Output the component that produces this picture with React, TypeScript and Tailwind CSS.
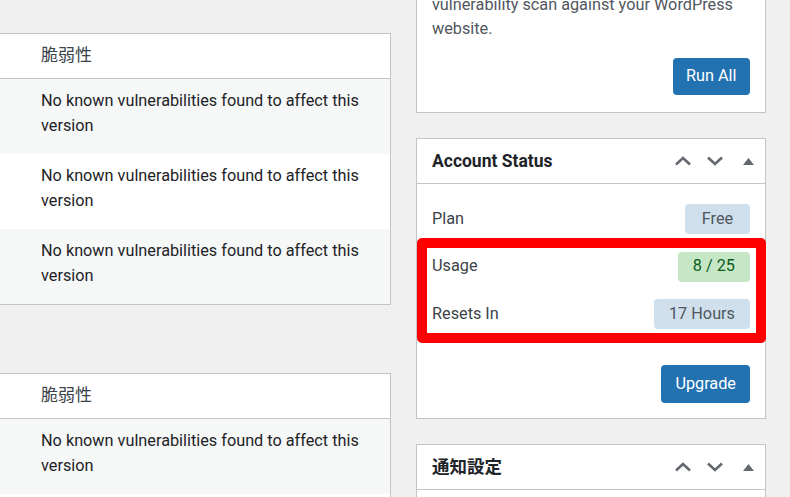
import React from "react";

const font = { fontFamily: 'Roboto, "Noto Sans CJK JP", sans-serif' };

function HeaderIcons() {
  return (
    <div className="flex items-center text-[#646970]">
      <span className="w-[32px] h-[44px] flex items-center justify-center">
        <svg width="18" height="10" viewBox="0 0 18 10" fill="none">
          <polyline points="2,8.5 9,2 16,8.5" stroke="currentColor" strokeWidth="2.6" />
        </svg>
      </span>
      <span className="w-[32px] h-[44px] flex items-center justify-center">
        <svg width="18" height="10" viewBox="0 0 18 10" fill="none">
          <polyline points="2,1.5 9,8 16,1.5" stroke="currentColor" strokeWidth="2.6" />
        </svg>
      </span>
      <span className="w-[34px] h-[44px] flex items-center justify-center">
        <svg width="11" height="7" viewBox="0 0 11 7">
          <polygon points="0,7 5.5,0 11,7" fill="currentColor" />
        </svg>
      </span>
    </div>
  );
}

function VulnTable({ rows }: { rows: number }) {
  return (
    <div className="bg-white border-y border-r border-[#c3c4c7]">
      <div className="h-[45px] flex items-center pl-[41px] text-[17px] text-[#3c434a] border-b border-[#c3c4c7]">
        脆弱性
      </div>
      {Array.from({ length: rows }).map((_, i) => (
        <div
          key={i}
          className={`pl-[41px] pr-4 pt-[9px] pb-[16px] h-[75px] text-[16.25px] leading-[25px] text-[#1d2327] ${
            i % 2 === 0 ? "bg-[#f6f7f7]" : "bg-white"
          }`}
        >
          No known vulnerabilities found to affect this version
        </div>
      ))}
    </div>
  );
}

function Badge({ children, tone, className = "" }: { children: React.ReactNode; tone: "blue" | "green"; className?: string }) {
  return (
    <span
      className={`h-[30px] px-[15px] rounded-[4px] flex items-center justify-center text-[16.25px] ${
        tone === "green" ? "bg-[#c6e7c6] text-[#0a5c1a]" : "bg-[#cfe0ec] text-[#50575e]"
      } ${className}`}
    >
      {children}
    </span>
  );
}

export default function App() {
  return (
    <div className="w-[790px] h-[497px] overflow-hidden bg-[#f0f0f1] flex items-start" style={font}>
      <div className="w-[391px] pt-[33px] flex flex-col gap-[68px] shrink-0">
        <VulnTable rows={3} />
        <VulnTable rows={2} />
      </div>

      <div className="ml-[25px] w-[350px] flex flex-col gap-[25px] -mt-[7px] shrink-0">
        <div className="bg-white border-x border-b border-[#c3c4c7] px-[15px] pb-[17px]">
          <p className="text-[16.25px] leading-[24px] text-[#50575e]">
            vulnerability scan against your WordPress website.
          </p>
          <div className="flex justify-end mt-[17px]">
            <button className="h-[37px] px-[13.5px] rounded-[4px] bg-[#2271b1] text-white text-[16.25px]">Run All</button>
          </div>
        </div>

        <div className="bg-white border border-[#c3c4c7]">
          <div className="h-[45px] flex items-center justify-between pl-[15px] border-b border-[#c3c4c7]">
            <h2 className="text-[17.5px] font-bold text-[#1d2327]">Account Status</h2>
            <HeaderIcons />
          </div>
          <div className="relative px-[15px] pt-[20px] pb-[15px]">
            <div className="flex flex-col gap-[17.5px]">
              <div className="flex items-center justify-between text-[16.25px] text-[#3c434a]">
                <span>Plan</span>
                <Badge tone="blue" className="min-w-[65px]">Free</Badge>
              </div>
              <div className="flex items-center justify-between text-[16.25px] text-[#3c434a]">
                <span>Usage</span>
                <Badge tone="green">8 / 25</Badge>
              </div>
              <div className="flex items-center justify-between text-[16.25px] text-[#3c434a]">
                <span>Resets In</span>
                <Badge tone="blue">17 Hours</Badge>
              </div>
            </div>
            <div className="flex justify-end mt-[36px]">
              <button className="h-[38px] px-[14px] rounded-[4px] bg-[#2271b1] text-white text-[16.25px]">Upgrade</button>
            </div>
            <div className="absolute left-0 right-[-1px] top-[54px] h-[105px] border-[10px] border-[#ff0000] rounded-[5px] pointer-events-none" />
          </div>
        </div>

        <div className="bg-white border border-[#c3c4c7] h-[80px]">
          <div className="h-[45px] flex items-center justify-between pl-[15px] border-b border-[#c3c4c7]">
            <h2 className="text-[17.5px] font-bold text-[#1d2327]">通知設定</h2>
            <HeaderIcons />
          </div>
        </div>
      </div>
    </div>
  );
}
